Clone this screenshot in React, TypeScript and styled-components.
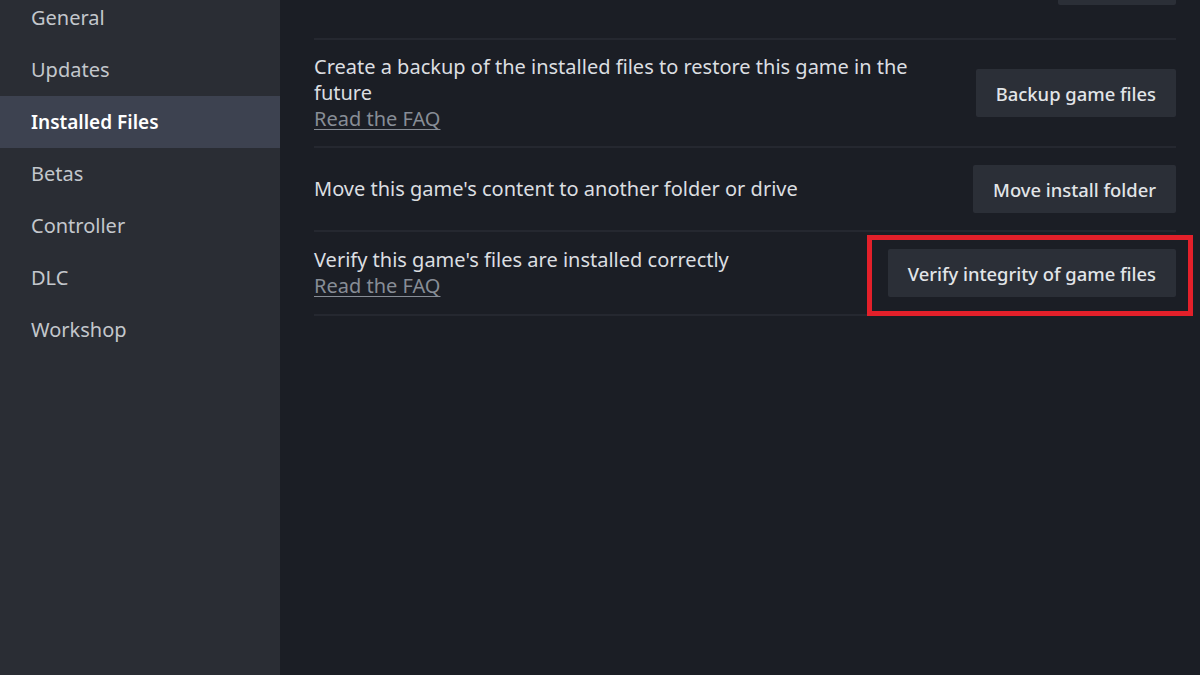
import React from "react";
import styled, { createGlobalStyle } from "styled-components";

const Global = createGlobalStyle`
  html, body { margin: 0; padding: 0; height: 100%; background: #1b1e25; }
  #root { height: 100%; }
  * { box-sizing: border-box; }
`;

const Page = styled.div`
  display: flex;
  width: 1200px;
  height: 675px;
  overflow: hidden;
  font-family: "Noto Sans", "Open Sans", sans-serif;
`;

const Sidebar = styled.nav`
  width: 280px;
  flex: none;
  background: #2a2d34;
  overflow: hidden;
`;

const NavList = styled.div`
  display: flex;
  flex-direction: column;
  margin-top: -8px;
`;

const NavItem = styled.div<{ $active?: boolean }>`
  height: 52px;
  display: flex;
  align-items: center;
  padding-left: 31px;
  padding-bottom: 1px;
  font-size: ${(p) => (p.$active ? 19 : 20)}px;
  color: ${(p) => (p.$active ? "#ffffff" : "#c3c7cc")};
  font-weight: ${(p) => (p.$active ? 600 : 400)};
  background: ${(p) => (p.$active ? "#3d4250" : "transparent")};
`;

const Main = styled.main`
  flex: 1;
  background: #1b1e25;
  padding: 0 24px 0 34px;
  overflow: hidden;
`;

const RowList = styled.div`
  display: flex;
  flex-direction: column;
  margin-top: -72px;
`;

const Row = styled.div<{ $minHeight?: number }>`
  display: flex;
  align-items: center;
  justify-content: space-between;
  gap: 24px;
  padding: 14px 0;
  min-height: ${(p) => p.$minHeight ?? 84}px;
  border-bottom: 2px solid #252830;
`;

const Description = styled.div`
  display: flex;
  flex-direction: column;
  max-width: 630px;
  font-size: 20px;
  line-height: 26px;
  color: #dcdee1;
`;

const FaqLink = styled.a`
  color: #878d96;
  text-decoration: underline;
  text-underline-offset: 3px;
  text-decoration-thickness: 1px;
  cursor: pointer;
  align-self: flex-start;
`;

const ButtonWrap = styled.div`
  position: relative;
  flex: none;
`;

const Button = styled.button<{ $width?: number }>`
  height: 48px;
  ${(p) => (p.$width ? `width: ${p.$width}px;` : "")}
  padding: 0 20px;
  border: none;
  border-radius: 2px;
  background: #2b2f37;
  color: #e2e5e8;
  font-family: "Noto Sans", "Open Sans", sans-serif;
  font-size: 18.4px;
  font-weight: 500;
  cursor: pointer;
`;

const Highlight = styled.div`
  position: absolute;
  left: -21px;
  right: -17px;
  top: -14px;
  bottom: -19px;
  border: 5px solid #e3202a;
  pointer-events: none;
`;

const navItems = ["General", "Updates", "Installed Files", "Betas", "Controller", "DLC", "Workshop"];

export default function App() {
  return (
    <>
      <Global />
      <Page>
        <Sidebar>
          <NavList>
            {navItems.map((n) => (
              <NavItem key={n} $active={n === "Installed Files"}>
                {n}
              </NavItem>
            ))}
          </NavList>
        </Sidebar>
        <Main>
          <RowList>
            <Row $minHeight={112}>
              <Description />
              <ButtonWrap>
                <Button aria-label="Browse" $width={118} />
              </ButtonWrap>
            </Row>
            <Row>
              <Description>
                <span>Create a backup of the installed files to restore this game in the future</span>
                <FaqLink>Read the FAQ</FaqLink>
              </Description>
              <ButtonWrap>
                <Button>Backup game files</Button>
              </ButtonWrap>
            </Row>
            <Row>
              <Description>
                <span>Move this game's content to another folder or drive</span>
              </Description>
              <ButtonWrap>
                <Button>Move install folder</Button>
              </ButtonWrap>
            </Row>
            <Row>
              <Description>
                <span>Verify this game's files are installed correctly</span>
                <FaqLink>Read the FAQ</FaqLink>
              </Description>
              <ButtonWrap>
                <Button>Verify integrity of game files</Button>
                <Highlight />
              </ButtonWrap>
            </Row>
          </RowList>
        </Main>
      </Page>
    </>
  );
}
